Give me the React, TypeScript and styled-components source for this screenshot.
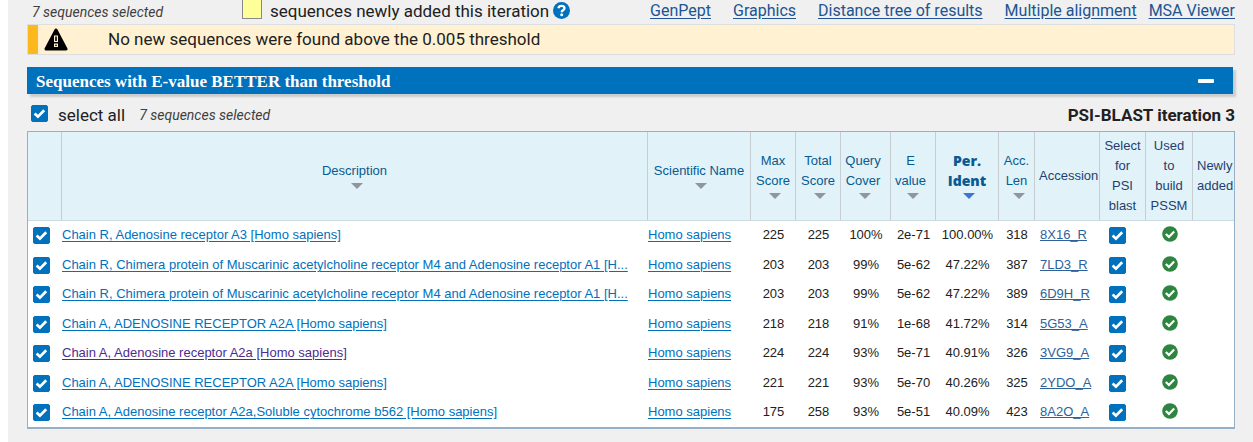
import React, { useState } from "react";
import styled, { createGlobalStyle, css } from "styled-components";

const GlobalStyle = createGlobalStyle`
  *, *::before, *::after { box-sizing: border-box; }
  body {
    margin: 0;
    background: #fff;
    color: #212121;
    font-family: Roboto, sans-serif;
    font-size: 16px;
    line-height: 20px;
  }
`;

const Page = styled.main`
  margin-left: 8px;
  padding: 0 18px 14px 19px;
  background: #f0f0f0;
`;

const TopBar = styled.div`
  display: flex;
  align-items: flex-start;
  height: 24px;
`;

const Selected = styled.em`
  font-size: 14px;
  line-height: 24px;
  color: #404040;
`;

const TopSelected = styled(Selected)`
  padding-left: 5px;
  flex: 0 0 215px;
`;

const Swatch = styled.span`
  width: 20px;
  height: 19px;
  border: 1px solid #888;
  border-top: 0;
  background: #ff9;
`;

const Legend = styled.span`
  margin-left: 8px;
  font-size: 17px;
  line-height: 22px;
`;

const HelpButton = styled.button`
  display: grid;
  margin: 2px 0 0 4px;
  padding: 0;
  border: 0;
  background: none;
`;

const Views = styled.nav`
  display: flex;
  margin-left: auto;
  gap: 22px;
  line-height: 22px;
`;

const ViewLink = styled.a<{ $tight?: boolean }>`
  color: #205493;
  text-underline-offset: 2px;
  margin-left: ${(p) => (p.$tight ? "-10px" : "0")};
`;

const Notice = styled.div`
  display: flex;
  align-items: center;
  height: 31px;
  padding: 0 0 2px 5px;
  border: 1px solid #dcdee0;
  background: #fff1d2;
  box-shadow: inset 10px 0 0 #fdb81e;
`;

const WarningIcon = styled.svg`
  margin: 2px 0 0 11px;
`;

const NoticeText = styled.p`
  margin: 0 0 0 40px;
  font-size: 17px;
`;

const SectionBar = styled.header`
  display: flex;
  align-items: center;
  justify-content: space-between;
  height: 27px;
  margin: 12px 2px 0 0;
  padding: 0 19px 0 9px;
  background: #0071bc;
  box-shadow: 3px 3px 2px #ccc;
`;

const SectionTitle = styled.h2`
  margin: 0;
  padding-top: 2px;
  color: #fff;
  font: bold 17px/20px "Liberation Serif", serif;
`;

const CollapseButton = styled.button`
  width: 16px;
  height: 20px;
  padding: 0;
  border: 0;
  background: none;
  display: grid;
  align-items: center;

  &::before {
    content: "";
    height: 4px;
    border-radius: 1px;
    background: #fff;
  }
`;

const SelectRow = styled.div`
  display: flex;
  align-items: center;
  height: 37px;
  padding: 5px 0 0 4px;
`;

const SelectAll = styled.label`
  display: flex;
  align-items: flex-start;
  gap: 10px;
  margin-right: 14px;
  font-size: 17px;
`;

const Iteration = styled.strong`
  margin-left: auto;
  font-size: 17px;
`;

const CheckWrap = styled.span`
  display: inline-grid;
  width: 17px;
  height: 17px;
  vertical-align: top;

  > * {
    grid-area: 1 / 1;
  }
`;

const CheckInput = styled.input`
  appearance: none;
  width: 17px;
  height: 17px;
  margin: 0;
  border: 1px solid #0071bc;
  border-radius: 2px;
  background: #fff;

  &:checked {
    background: #0071bc;
  }
  &:not(:checked) + svg {
    display: none;
  }
`;

const TickMark = styled.svg`
  pointer-events: none;
`;

const HitTable = styled.table`
  width: 100%;
  table-layout: fixed;
  border-collapse: separate;
  border-spacing: 0;
  border: 1px solid #97b0c8;
  border-bottom-width: 2px;
  background: #fff;
  font: 13px/20px "Liberation Sans", Arial, sans-serif;
`;

const Col = styled.col<{ $w?: number }>`
  width: ${(p) => (p.$w ? `${p.$w}px` : "auto")};
`;

const HeadCell = styled.th<{ $left?: boolean; $shift?: boolean }>`
  height: 89px;
  padding: 0 ${(p) => (p.$shift ? 5 : 0)}px 1px ${(p) => (p.$left ? 4 : 0)}px;
  border-right: 1px solid #c8cdd2;
  border-bottom: 1px solid #cfdbe3;
  background: #e1f2f8;
  color: #1f3f70;
  font-weight: normal;
  text-align: ${(p) => (p.$left ? "left" : "center")};

  &:last-child {
    border-right: 0;
  }
`;

const SortButton = styled.button<{ $active?: boolean }>`
  width: 100%;
  padding: 0;
  border: 0;
  background: none;
  color: #075a92;
  font: inherit;
  ${(p) =>
    p.$active &&
    css`
      font-family: "Open Sans", sans-serif;
      font-size: 14px;
      font-weight: 800;
    `}

  &::after {
    content: "";
    display: block;
    width: 12px;
    height: 6px;
    margin: 2px auto;
    border-left: 6px solid transparent;
    border-right: 6px solid transparent;
    border-top: 6px solid ${(p) => (p.$active ? "#3a76d2" : "#8f979d")};
    position: relative;
    left: 2px;
  }
`;

const Row = styled.tr`
  height: 30px;

  &:nth-child(even),
  &:last-child {
    height: 29px;
  }
`;

const Cell = styled.td<{ $align?: "left" | "center"; $pad?: number; $top?: number }>`
  padding: ${(p) => p.$top ?? 4}px 0 0 ${(p) => p.$pad ?? 0}px;
  vertical-align: top;
  text-align: ${(p) => p.$align ?? "center"};
  white-space: nowrap;
`;

const TextLink = styled.a<{ $visited?: boolean; $muted?: boolean }>`
  display: block;
  overflow: hidden;
  text-overflow: ellipsis;
  color: ${(p) => (p.$visited ? "#4c2c92" : p.$muted ? "#2e6299" : "#0071bc")};
  text-underline-offset: ${(p) => (p.$muted ? 1 : 2)}px;
  text-decoration-skip-ink: ${(p) => (p.$muted ? "none" : "auto")};
`;

const Used = styled.svg`
  display: block;
  margin: 0 auto;
`;

function Check({ label, checked, onChange }: { label?: string; checked: boolean; onChange: () => void }) {
  return (
    <CheckWrap>
      <CheckInput type="checkbox" aria-label={label} checked={checked} onChange={onChange} />
      <TickMark width="17" height="17" viewBox="0 0 17 17">
        <path d="M3.6 8.6 6.9 11.6 13.2 5.2" fill="none" stroke="#fff" strokeWidth="2.7" />
      </TickMark>
    </CheckWrap>
  );
}

const hits = [
  ["Chain R, Adenosine receptor A3 [Homo sapiens]", "225", "225", "100%", "2e-71", "100.00%", "318", "8X16_R"],
  ["Chain R, Chimera protein of Muscarinic acetylcholine receptor M4 and Adenosine receptor A1 [H...", "203", "203", "99%", "5e-62", "47.22%", "387", "7LD3_R"],
  ["Chain R, Chimera protein of Muscarinic acetylcholine receptor M4 and Adenosine receptor A1 [H...", "203", "203", "99%", "5e-62", "47.22%", "389", "6D9H_R"],
  ["Chain A, ADENOSINE RECEPTOR A2A [Homo sapiens]", "218", "218", "91%", "1e-68", "41.72%", "314", "5G53_A"],
  ["Chain A, Adenosine receptor A2a [Homo sapiens]", "224", "224", "93%", "5e-71", "40.91%", "326", "3VG9_A"],
  ["Chain A, ADENOSINE RECEPTOR A2A [Homo sapiens]", "221", "221", "93%", "5e-70", "40.26%", "325", "2YDO_A"],
  ["Chain A, Adenosine receptor A2a,Soluble cytochrome b562 [Homo sapiens]", "175", "258", "93%", "5e-51", "40.09%", "423", "8A2O_A"],
];

const sortable: { lines: string[]; active?: boolean; shift?: boolean }[] = [
  { lines: ["Description"] },
  { lines: ["Scientific Name"] },
  { lines: ["Max", "Score"] },
  { lines: ["Total", "Score"] },
  { lines: ["Query", "Cover"], shift: true },
  { lines: ["E", "value"], shift: true },
  { lines: ["Per.", "Ident"], active: true },
  { lines: ["Acc.", "Len"] },
];

const columnWidths = [34, undefined, 103, 45, 45, 50, 45, 63, 36, 65, 46, 47, 41];

function Lines({ lines }: { lines: string[] }) {
  return (
    <>
      {lines.map((line, i) => (
        <React.Fragment key={line}>
          {i > 0 && <br />}
          {line}
        </React.Fragment>
      ))}
    </>
  );
}

export default function App() {
  const [picked, setPicked] = useState(hits.map(() => true));
  const [psi, setPsi] = useState(hits.map(() => true));
  const flip = (list: boolean[], at: number) => list.map((v, i) => (i === at ? !v : v));
  const all = picked.every(Boolean);
  const count = picked.filter(Boolean).length;

  return (
    <>
      <GlobalStyle />
      <Page>
        <TopBar>
          <TopSelected>{count} sequences selected</TopSelected>
          <Swatch />
          <Legend>sequences newly added this iteration</Legend>
          <HelpButton aria-label="Help">
            <svg width="17" height="17" viewBox="0 0 17 17">
              <circle cx="8.5" cy="8.5" r="8.5" fill="#0071bc" />
              <path d="M5.4 6.3C5.7 4.5 7 3.9 8.5 3.9c1.7 0 3 .9 3 2.4 0 2-2.8 2-2.8 3.9" fill="none" stroke="#fff" strokeWidth="2.3" />
              <circle cx="8.7" cy="12.7" r="1.5" fill="#fff" />
            </svg>
          </HelpButton>
          <Views>
            <ViewLink href="#genpept">GenPept</ViewLink>
            <ViewLink href="#graphics">Graphics</ViewLink>
            <ViewLink href="#tree">Distance tree of results</ViewLink>
            <ViewLink href="#alignment">Multiple alignment</ViewLink>
            <ViewLink href="#msa" $tight>MSA Viewer</ViewLink>
          </Views>
        </TopBar>

        <Notice role="status">
          <WarningIcon width="24" height="23" viewBox="0 0 24 23">
            <path d="M12 2 22 21H2Z" fill="#000" stroke="#000" strokeWidth="3" strokeLinejoin="round" />
            <path d="M10 7.5h4v6.5h-4ZM10 15.5h4v3.500h-4Z" fill="#fff1d2" />
            <path d="M11.200 8.500h1.600v4.500h-1.600ZM11.200 16.700h1.600v1.200h-1.600Z" fill="#000" />
          </WarningIcon>
          <NoticeText>No new sequences were found above the 0.005 threshold</NoticeText>
        </Notice>

        <SectionBar>
          <SectionTitle>Sequences with E-value BETTER than threshold</SectionTitle>
          <CollapseButton aria-label="Collapse section" />
        </SectionBar>

        <SelectRow>
          <SelectAll>
            <Check checked={all} onChange={() => setPicked(hits.map(() => !all))} />
            select all
          </SelectAll>
          <Selected>{count} sequences selected</Selected>
          <Iteration>PSI-BLAST iteration 3</Iteration>
        </SelectRow>

        <HitTable>
          <colgroup>
            {columnWidths.map((w, i) => (
              <Col key={i} $w={w} />
            ))}
          </colgroup>
          <thead>
            <tr>
              <HeadCell />
              {sortable.map((h) => (
                <HeadCell key={h.lines.join()} $shift={h.shift}>
                  <SortButton $active={h.active}>
                    <Lines lines={h.lines} />
                  </SortButton>
                </HeadCell>
              ))}
              <HeadCell $left>Accession</HeadCell>
              <HeadCell><Lines lines={["Select", "for", "PSI", "blast"]} /></HeadCell>
              <HeadCell><Lines lines={["Used", "to", "build", "PSSM"]} /></HeadCell>
              <HeadCell $left><Lines lines={["Newly", "added"]} /></HeadCell>
            </tr>
          </thead>
          <tbody>
            {hits.map(([name, max, total, cover, e, ident, len, acc], i) => (
              <Row key={acc}>
                <Cell $align="left" $pad={5} $top={6}>
                  <Check label={`Select ${acc}`} checked={picked[i]} onChange={() => setPicked(flip(picked, i))} />
                </Cell>
                <Cell $align="left">
                  <TextLink href={`#${acc}`} $visited={acc === "3VG9_A"}>{name}</TextLink>
                </Cell>
                <Cell $align="left"><TextLink href="#taxonomy">Homo sapiens</TextLink></Cell>
                <Cell>{max}</Cell>
                <Cell>{total}</Cell>
                <Cell>{cover}</Cell>
                <Cell>{e}</Cell>
                <Cell>{ident}</Cell>
                <Cell>{len}</Cell>
                <Cell $align="left" $pad={5}><TextLink href={`#entry-${acc}`} $muted>{acc}</TextLink></Cell>
                <Cell $align="left" $pad={9} $top={6}>
                  <Check label={`Use ${acc} for PSI blast`} checked={psi[i]} onChange={() => setPsi(flip(psi, i))} />
                </Cell>
                <Cell $top={5}>
                  <Used width="16" height="16" viewBox="0 0 16 16" role="img" aria-label="Used">
                    <circle cx="8" cy="8" r="7.8" fill="#2e8540" />
                    <path d="M3.8 8 6.9 10.9 12.2 5.5" fill="none" stroke="#fff" strokeWidth="2.2" />
                  </Used>
                </Cell>
                <Cell />
              </Row>
            ))}
          </tbody>
        </HitTable>
      </Page>
    </>
  );
}
